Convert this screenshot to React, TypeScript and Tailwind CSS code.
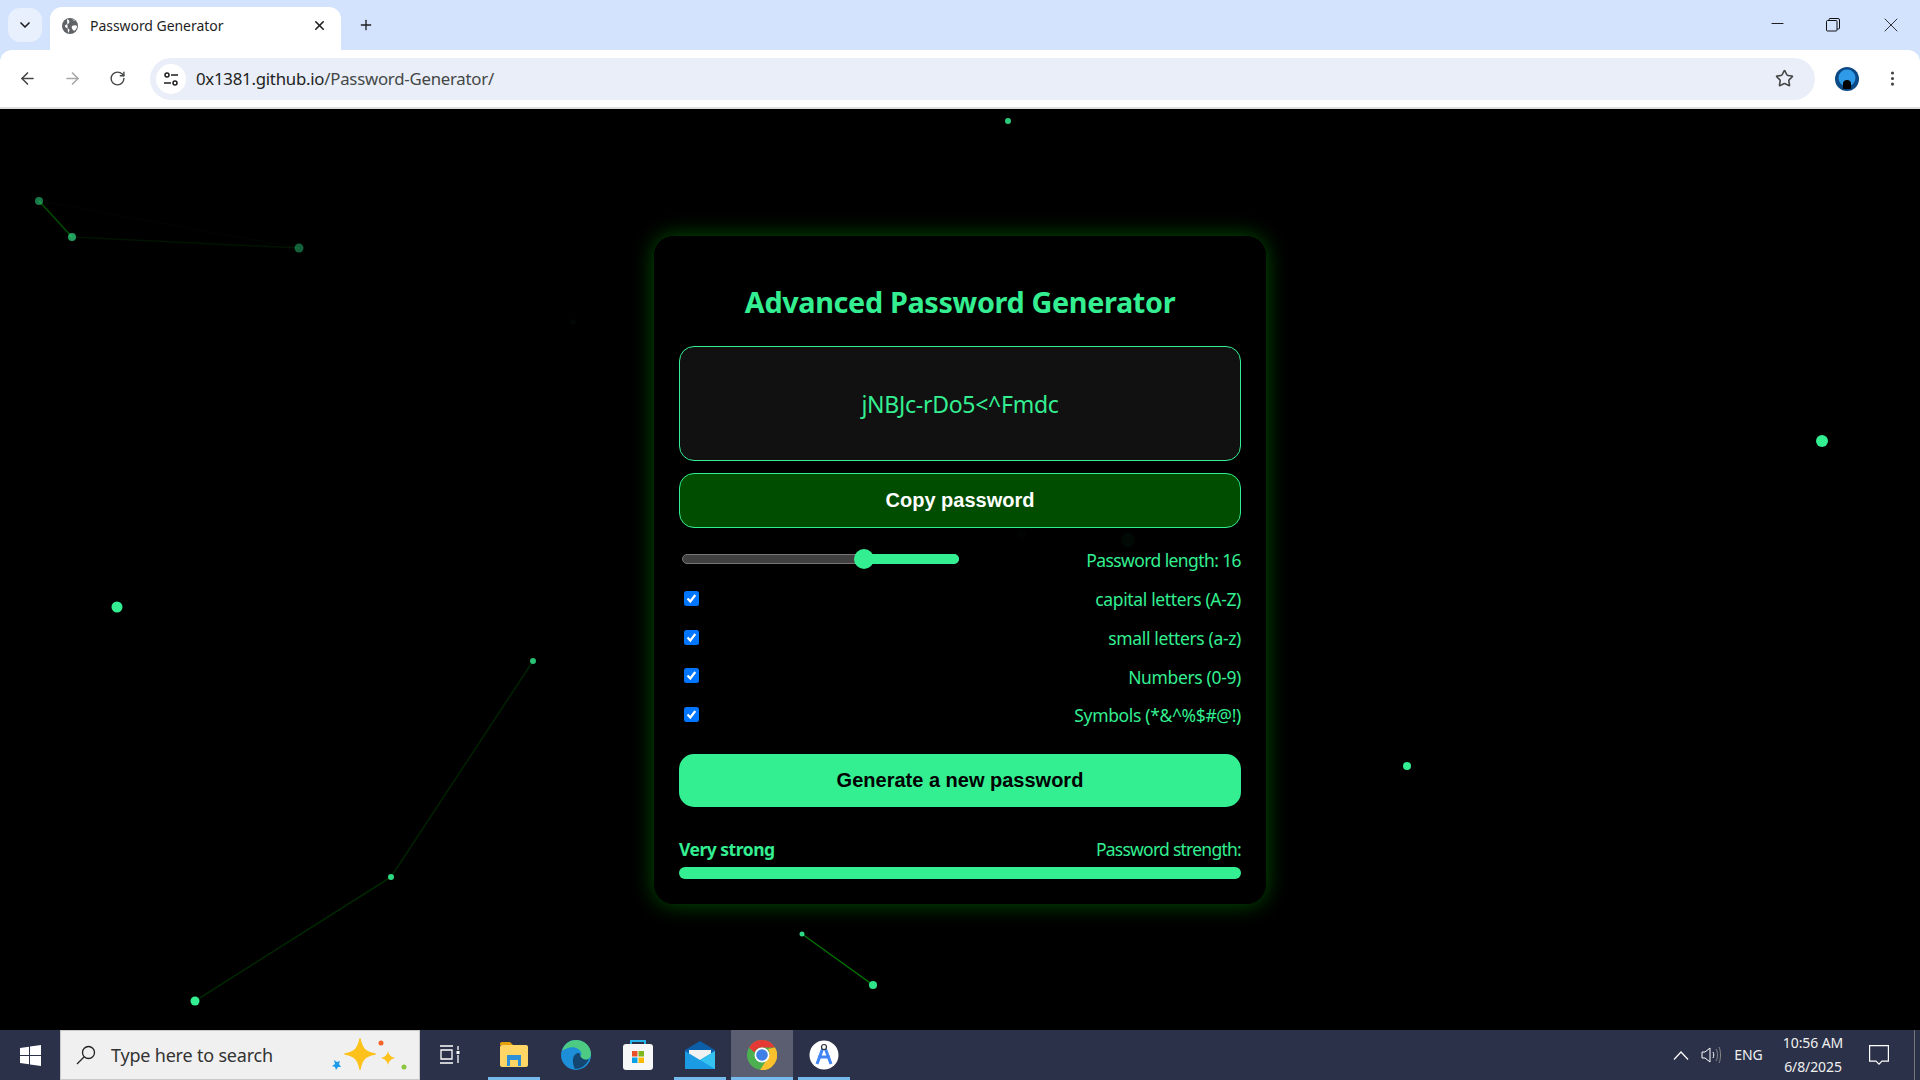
import { ChevronDown, X, Plus, ArrowLeft, ArrowRight, RotateCw, Star, EllipsisVertical, Minus } from "lucide-react";

const green = "#33ef91";

const options = ["capital letters (A-Z)", "small letters (a-z)", "Numbers (0-9)", "Symbols (*&^%$#@!)"];

// background particles, page coordinates
const dots = [
  { x: 1008, y: 13, r: 3, o: 0.85 },
  { x: 39, y: 93, r: 4, o: 0.5 },
  { x: 72, y: 129, r: 4, o: 0.65 },
  { x: 299, y: 140, r: 4.5, o: 0.4 },
  { x: 573, y: 214, r: 3, o: 0.03 },
  { x: 1822, y: 333, r: 6, o: 1 },
  { x: 117, y: 499, r: 5.5, o: 1 },
  { x: 533, y: 553, r: 3, o: 0.8 },
  { x: 391, y: 769, r: 3, o: 0.9 },
  { x: 195, y: 893, r: 4.5, o: 1 },
  { x: 802, y: 826, r: 2.5, o: 0.9 },
  { x: 873, y: 877, r: 4, o: 0.95 },
  { x: 1407, y: 658, r: 4, o: 1 },
  { x: 1128, y: 432, r: 7, o: 0.7 },
  { x: 1022, y: 427, r: 5, o: 0.3 },
];

const lines = [
  { a: 1, b: 2, o: 0.3 },
  { a: 2, b: 3, o: 0.08 },
  { a: 1, b: 3, o: 0.02 },
  { a: 7, b: 8, o: 0.13 },
  { a: 8, b: 9, o: 0.15 },
  { a: 10, b: 11, o: 0.45 },
];

const Chrome = () => (
  <div className="h-[109px] shrink-0 bg-[#d3e3fd] font-['Noto_Sans',sans-serif] text-[#1f1f1f]">
    <div className="flex h-[50px] items-end pl-2">
      <div className="mb-2 flex h-[34px] w-[34px] items-center justify-center rounded-xl bg-[#e9f0fd]">
        <ChevronDown size={16} strokeWidth={2.5} />
      </div>
      <div className="ml-2 flex h-[43px] w-[291px] items-center rounded-t-xl bg-white pb-[6px] pl-[11px] pr-[14px]">
        <svg width="18" height="18" viewBox="0 0 18 18">
          <circle cx="9" cy="9" r="8" fill="#5f6368" />
          <path d="M6 2c2 1 3 2 2 4S4 7 4 9s3 2 4 3 0 3-1 4M11 9c2-1 4-1 5 0 0 2-1 4-3 5-1-1-3-3-2-5zM11 2c1 1 2 2 4 2" fill="#fff" />
        </svg>
        <span className="ml-[11px] flex-1 text-[14px] leading-none tracking-[-0.05px]">Password Generator</span>
        <X size={15} strokeWidth={2.5} />
      </div>
      <div className="mb-[17px] ml-[17px] flex h-[16px] w-[16px] items-center justify-center">
        <Plus size={18} strokeWidth={2} />
      </div>
      <div className="ml-auto flex h-[50px] items-start text-[#1f1f1f]">
        <div className="flex h-[47px] w-[58px] items-center justify-center pl-[4px]"><Minus size={19} strokeWidth={1.3} /></div>
        <div className="flex h-[49px] w-[58px] items-center justify-center">
          <svg width="14" height="14" viewBox="0 0 14 14" fill="none" stroke="#111" strokeWidth="1">
            <rect x="0.5" y="2.5" width="10.5" height="10.5" rx="1" />
            <path d="M3 2.5V1.5a1 1 0 0 1 1-1h8a1.5 1.5 0 0 1 1.5 1.5v8a1 1 0 0 1-1 1H11" />
          </svg>
        </div>
        <div className="flex h-[49px] w-[58px] items-center justify-center"><X size={24} strokeWidth={0.9} /></div>
      </div>
    </div>
    <div className="flex h-[59px] items-center rounded-t-xl border-b-2 border-[#dedede] bg-white">
      <div className="flex w-[150px] shrink-0 items-center pl-[18px] text-[#444746]">
        <ArrowLeft size={19} strokeWidth={2} />
        <ArrowRight size={19} strokeWidth={2} className="ml-[26px] text-[#a8a8a8]" />
        <RotateCw size={17} strokeWidth={2} className="ml-[27px]" />
      </div>
      <div className="flex h-[42px] w-[1665px] items-center rounded-full bg-[#e9eef8] pl-[6px] pr-[21px]">
        <div className="flex h-[30px] w-[30px] items-center justify-center rounded-full bg-white">
          <svg width="16" height="16" viewBox="0 0 16 16" fill="none" stroke="#1f1f1f" strokeWidth="1.5">
            <circle cx="4" cy="4" r="2" />
            <path d="M8 4h7M1 12h7" />
            <circle cx="12" cy="12" r="2" />
          </svg>
        </div>
        <span className="ml-[10px] flex-1 pt-px text-[16.8px] leading-none tracking-[-0.24px]">
          0x1381.github.io<span className="text-[#444746]">/Password-Generator/</span>
        </span>
        <Star size={19} strokeWidth={2} className="text-[#444746]" />
      </div>
      <div className="ml-[20px] flex h-[24px] w-[24px] items-center justify-center overflow-hidden rounded-full bg-[#0b4a86]">
        <svg width="24" height="24" viewBox="0 0 24 24">
          <circle cx="12" cy="11" r="8.5" fill="#2f9be8" />
          <path d="M8 22v-5c0-3 1.500-4 4-4s4 1 4 4v5z" fill="#000" />
        </svg>
      </div>
      <EllipsisVertical size={19} className="ml-[24px] text-[#444746]" />
    </div>
  </div>
);

const Background = () => (
  <svg className="absolute inset-0 h-full w-full" viewBox="0 1 1920 921">
    {lines.map((l, i) => (
      <line key={i} x1={dots[l.a].x} y1={dots[l.a].y} x2={dots[l.b].x} y2={dots[l.b].y} stroke="#00ff00" strokeOpacity={l.o} strokeWidth="1.5" />
    ))}
    {dots.map((d, i) => (
      <circle key={i} cx={d.x} cy={d.y} r={d.r} fill={green} fillOpacity={d.o} />
    ))}
  </svg>
);

const Slider = () => (
  <div className="relative ml-[3px] h-[10px] w-[277px] rounded-full border border-[#767676] bg-[#404040]">
    <div className="absolute -bottom-px -right-px -top-px w-[94px] rounded-r-full bg-[#33ef91]" />
    <div className="absolute left-[171px] top-[-6px] h-5 w-5 rounded-full bg-[#33ef91]" />
  </div>
);

const CheckBox = () => (
  <div className="ml-[5px] flex h-[15px] w-[15px] items-center justify-center rounded-[2.5px] bg-[#0075ff]">
    <svg width="13" height="13" viewBox="0 0 13 13" fill="none" stroke="#fff" strokeWidth="2.2">
      <path d="M2.500 6.500 5.300 9.500 10.300 3" />
    </svg>
  </div>
);

const Card = () => (
  <div className="relative ml-[654px] mt-[127px] h-[668px] w-[612px] rounded-[20px] bg-black/95 px-[25px] pt-[44px] text-[#33ef91] shadow-[0_0_22px_rgba(0,255,0,0.33)] font-['Noto_Sans',sans-serif]">
    <h1 className="h-[44px] text-center text-[28.8px] font-bold leading-[44px] tracking-[-0.35px]">Advanced Password Generator</h1>
    <div className="mt-[22px] flex h-[115px] items-center justify-center rounded-[15px] border border-[#33ef91] bg-[#111] pt-px text-[23px] tracking-[-0.27px]">
      jNBJc-rDo5&lt;^Fmdc
    </div>
    <button className="mt-3 block h-[55px] w-full rounded-[15px] border border-[#33ef91] bg-[#004d00] pb-[2px] text-[20px] font-bold text-white font-['Liberation_Sans',sans-serif]">
      Copy password
    </button>
    <div className="mt-[26px] flex h-[10px] items-center justify-between">
      <Slider />
      <span className="pt-[3px] text-[17.5px] tracking-[-0.6px]">Password length: 16</span>
    </div>
    <div className="mt-[27px] flex flex-col gap-[23.700px]">
      {options.map((o) => (
        <div key={o} className="flex h-[15px] items-center justify-between">
          <CheckBox />
          <span className="pt-[2px] text-[17.5px] tracking-[-0.35px]">{o}</span>
        </div>
      ))}
    </div>
    <button className="mt-[32px] block h-[53px] w-full rounded-[15px] bg-[#33ef91] pb-[2px] text-[20px] font-bold text-black font-['Liberation_Sans',sans-serif]">
      Generate a new password
    </button>
    <div className="mt-[29px] flex h-[26px] items-center justify-between text-[17.5px] tracking-[-0.5px]">
      <span className="font-bold">Very strong</span>
      <span className="tracking-[-0.75px]">Password strength:</span>
    </div>
    <div className="mt-[5px] h-3 rounded-md bg-[#33ef91]" />
  </div>
);

const TaskIcon = ({ active, underline, children }: { active?: boolean; underline?: boolean; children: React.ReactNode }) => (
  <div className={`relative flex h-[50px] w-[62px] items-center justify-center ${active ? "bg-[#5a5e70]" : ""}`}>
    {children}
    {underline && <div className={`absolute bottom-0 h-[3px] bg-[#76b9ed] ${active ? "inset-x-0" : "inset-x-[5px]"}`} />}
  </div>
);

const Taskbar = () => (
  <div className="flex h-[50px] shrink-0 items-center bg-[#2b3148] font-['Noto_Sans',sans-serif] text-[#f0f0f0]">
    <div className="flex h-[50px] w-[60px] items-center justify-center">
      <svg width="21" height="21" viewBox="0 0 21 21" fill="#fff">
        <path d="M0 3l9-1.300V10H0zM10 1.500 21 0v10H10zM0 11h9v8.300L0 18zM10 11h11v10l-11-1.500z" />
      </svg>
    </div>
    <div className="flex h-[50px] w-[360px] items-center border border-[#c8c8c8] bg-[#f0f0f0] pl-[14px] text-[#333]">
      <svg width="22" height="22" viewBox="0 0 22 22" fill="none" stroke="#222" strokeWidth="1.300">
        <circle cx="13.500" cy="8.500" r="6" />
        <path d="M9 13 2 20" />
      </svg>
      <span className="ml-[14px] text-[18px] tracking-[-0.2px]">Type here to search</span>
      <svg className="ml-[55px]" width="80" height="36" viewBox="0 0 80 36">
        <path d="M32 2c2 10 5 13 15 15-10 2-13 5-15 15-2-10-5-13-15-15 10-2 13-5 15-15z" fill="#fcc21b" stroke="#fcc21b" strokeWidth="1.500" strokeLinejoin="round" />
        <path d="M60 14c1 4 3 6 7 7-4 1-6 3-7 7-1-4-3-6-7-7 4-1 6-3 7-7z" fill="#fcc21b" />
        <path d="M6 23l3 2 3-1-1 3 2 3-3 0-2 3-1-3-3-1 3-2z" fill="#1e9be8" />
        <circle cx="53" cy="6" r="2.500" fill="#f4622a" />
        <circle cx="76" cy="30" r="2.500" fill="#8cc63e" />
      </svg>
    </div>
    <div className="flex h-[50px] w-[63px] items-center justify-center pr-[3px]">
      <svg width="22" height="20" viewBox="0 0 22 20" fill="none" stroke="#fff" strokeWidth="1.300">
        <path d="M1 1h13M2 5h11v9H2zM1 18h13M19 1v4M19 10v8" />
        <rect x="17.500" y="6" width="3" height="3" fill="#fff" stroke="none" />
      </svg>
    </div>
    <TaskIcon underline>
      <svg width="28" height="26" viewBox="0 0 28 26">
        <path d="M0 2a2 2 0 0 1 2-2h8l3 3H0z" fill="#e3a008" />
        <rect y="3" width="28" height="22" rx="2" fill="#ffd566" />
        <path d="M7 13h14v11h-3v-6h-8v6H7z" fill="#2d8fd5" />
      </svg>
    </TaskIcon>
    <TaskIcon>
      <svg width="30" height="30" viewBox="0 0 30 30">
        <circle cx="15" cy="15" r="15" fill="#1d8ed8" />
        <path d="M1 11C3 3 10 0 15 0c8 0 15 6 15 14 0 4-3 6-7 6-3 0-5-1-5-3 2-1 3-3 2-5-2-4-8-6-13-4-3 1-5 2-6 3z" fill="#4ecb83" />
        <path d="M13 16c2-3 5-4 6-2 0 4 5 7 9 5-3 7-9 10-14 10-2-4-3-9-1-13z" fill="#14466f" />
      </svg>
    </TaskIcon>
    <TaskIcon>
      <svg width="30" height="30" viewBox="0 0 30 30">
        <path d="M8 6V1h14v5" fill="none" stroke="#27b3e8" strokeWidth="2" />
        <rect y="4" width="30" height="26" rx="3" fill="#f7f7f7" />
        <rect x="9" y="11" width="5.500" height="5.500" fill="#e8502a" />
        <rect x="15.500" y="11" width="5.500" height="5.500" fill="#7db81d" />
        <rect x="9" y="17.500" width="5.500" height="5.500" fill="#0aa0e8" />
        <rect x="15.500" y="17.500" width="5.500" height="5.500" fill="#fdb900" />
      </svg>
    </TaskIcon>
    <TaskIcon underline>
      <svg width="30" height="28" viewBox="0 0 30 28">
        <path d="M0 9 15 0l15 9v3L15 20 0 12z" fill="#0a5fa8" />
        <path d="M4 9h22v4l-11 7-11-7z" fill="#f2f2f2" />
        <path d="M0 10l15 9 15-9v18H0z" fill="#1a9be4" />
        <path d="M30 10v18L15 19z" fill="#35c2f0" />
      </svg>
    </TaskIcon>
    <TaskIcon active underline>
      <svg width="30" height="30" viewBox="0 0 30 30">
        <circle cx="15" cy="15" r="15" fill="#4caf50" />
        <path d="M2 7.500A15 15 0 0 1 28 7.500H15a8 8 0 0 0-7.500 5z" fill="#e53935" />
        <path d="M28 7.500A15 15 0 0 1 13 30l6.500-10A8 8 0 0 0 21 9z" fill="#fbc02d" />
        <circle cx="15" cy="15" r="7.500" fill="#fff" />
        <circle cx="15" cy="15" r="5.800" fill="#3f7fe8" />
      </svg>
    </TaskIcon>
    <TaskIcon underline>
      <svg width="30" height="30" viewBox="0 0 30 30">
        <circle cx="15" cy="15" r="14.500" fill="#fff" />
        <path d="M15 5 8 24M15 5l7 19M9 17h12" fill="none" stroke="#4285f4" strokeWidth="3" />
        <circle cx="15" cy="7" r="2.500" fill="#fff" stroke="#333" strokeWidth="1.200" />
      </svg>
    </TaskIcon>
    <div className="ml-auto flex h-[50px] items-center">
      <svg width="16" height="9" viewBox="0 0 16 9" fill="none" stroke="#fff" strokeWidth="1.200">
        <path d="M1 8.500 8 1l7 7.500" />
      </svg>
      <svg className="ml-[12px]" width="20" height="18" viewBox="0 0 20 18" fill="none" stroke="#fff" strokeWidth="1">
        <path d="M1 6h3l5-4v14l-5-4H1z" />
        <path d="M12 6c1 2 1 4 0 6" />
        <path d="M15 3c2 3 2 9 0 12M18 1c2 4 2 12 0 16" stroke="#888" />
      </svg>
      <span className="ml-[12px] w-[31px] text-center text-[14px] leading-none">ENG</span>
      <div className="ml-[16px] flex w-[66px] flex-col items-center text-[14px] leading-[24px] tracking-[-0.1px]">
        <span>10:56 AM</span>
        <span>6/8/2025</span>
      </div>
      <svg className="ml-[23px]" width="20" height="20" viewBox="0 0 20 20" fill="none" stroke="#fff" strokeWidth="1.200">
        <path d="M.6.6h18.800v15.500H13l-3 3-3-3H.6z" />
      </svg>
      <div className="ml-[25px] h-[50px] w-[6px] border-l border-[#777]" />
    </div>
  </div>
);

const App = () => (
  <div className="flex h-[1080px] w-[1920px] flex-col overflow-hidden bg-black">
    <Chrome />
    <main className="relative flex-1 overflow-hidden">
      <Background />
      <Card />
    </main>
    <Taskbar />
  </div>
);

export default App;
